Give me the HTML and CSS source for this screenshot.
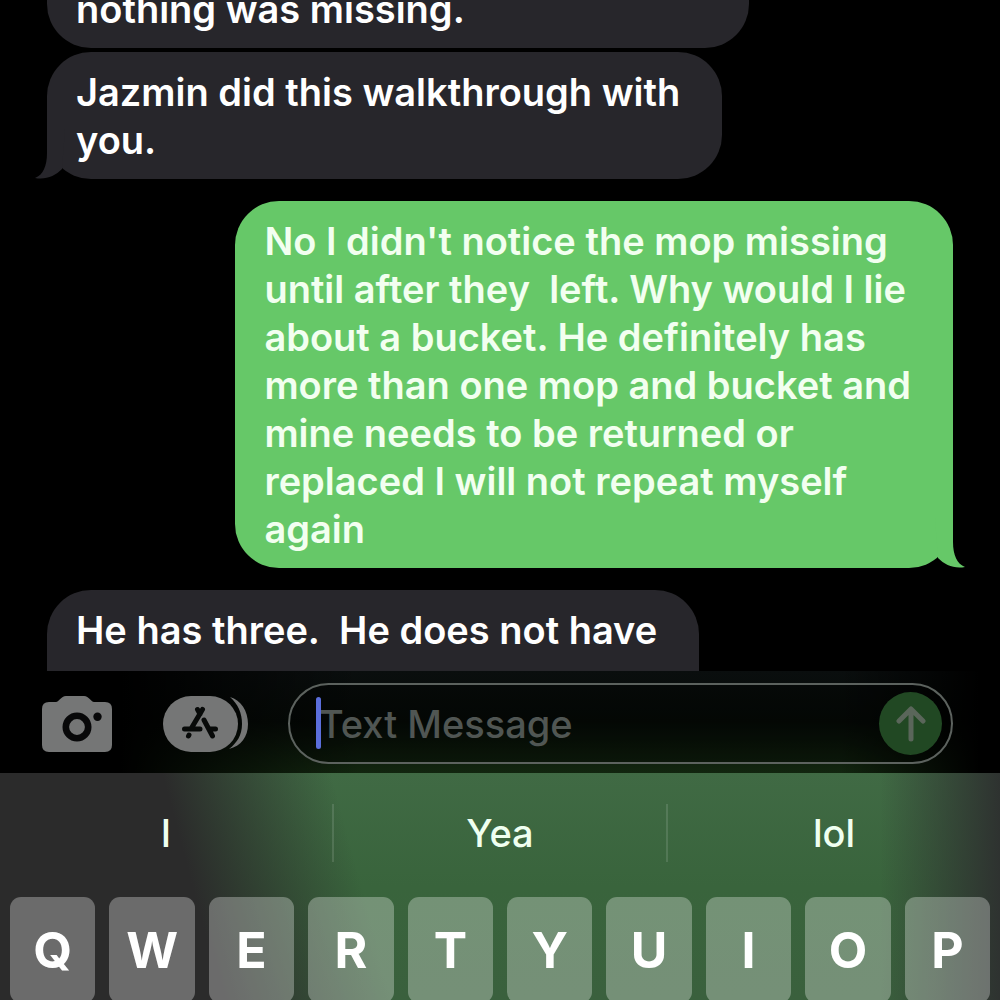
FILE: index.html
```html
<!DOCTYPE html>
<html lang="en">

<head>
  <meta charset="utf-8">
  <meta name="viewport" content="width=device-width, initial-scale=1">
  <title>Messages</title>
  <link rel="stylesheet" href="styles.css">
</head>

<body>
  <main class="thread">
    <p class="bubble received continued">nothing was missing.</p>
    <p class="bubble received">Jazmin did this walkthrough with<br>you.
      <svg class="tail" viewBox="0 0 30 50"><path d="M12 0V24C12 37 8 46 0 49C11 51 20 47 27 40L30 0Z" /></svg>
    </p>
    <p class="bubble sent">No I didn't notice the mop missing<br>until after they&nbsp; left. Why would I lie<br>about a bucket. He definitely has<br>more than one mop and bucket and<br>mine needs to be returned or<br>replaced I will not repeat myself<br>again
      <svg class="tail" viewBox="0 0 30 50"><path d="M12 0V24C12 37 8 46 0 49C11 51 20 47 27 40L30 0Z" /></svg>
    </p>
    <p class="bubble received cut">He has three.&nbsp; He does not have</p>
  </main>

  <form class="composer" onsubmit="return false">
    <button class="icon-button" type="button" aria-label="Camera">
      <svg width="70" height="56" viewBox="0 0 70 56">
        <path fill="#757676" d="M7 6H14C17 6 19 0 24 0H42C47 0 49 6 52 6H63Q70 6 70 13V49Q70 56 63 56H7Q0 56 0 49V13Q0 6 7 6Z" />
        <circle cx="35" cy="31" r="11.200" fill="none" stroke="#080809" stroke-width="6.600" />
        <circle cx="55.500" cy="20.800" r="4.200" fill="#080809" />
      </svg>
    </button>
    <button class="icon-button apps" type="button" aria-label="Apps">
      <svg width="85" height="56" viewBox="0 0 85 56">
        <path fill="#757676" d="M67 1C78 4 85 15 85 28S78 50 66 53C74 47 79 39 79 28S75 8 67 1Z" />
        <rect width="75" height="56" rx="28" fill="#757676" />
        <g fill="none" stroke="#080a09" stroke-width="5" stroke-linecap="round" stroke-linejoin="round">
          <path d="M34.500 13.500L37 18M39.500 13.500L28.500 32M41 24L49.500 40M47 33H52.500M21.500 33H37M26 39L25.500 40" />
        </g>
      </svg>
    </button>
    <div class="field">
      <input type="text" placeholder="Text Message" aria-label="Text Message">
      <span class="caret"></span>
      <button class="send" type="submit" aria-label="Send">
        <svg width="30" height="36" viewBox="0 0 30 36">
          <path d="M15 33V4M3 15L15 3L27 15" />
        </svg>
      </button>
    </div>
  </form>

  <section class="keyboard">
    <div class="suggestions">
      <button type="button">I</button>
      <button type="button">Yea</button>
      <button type="button">lol</button>
    </div>
    <div class="keys">
      <button type="button">Q</button>
      <button type="button">W</button>
      <button type="button">E</button>
      <button type="button">R</button>
      <button type="button">T</button>
      <button type="button">Y</button>
      <button type="button">U</button>
      <button type="button">I</button>
      <button type="button">O</button>
      <button type="button">P</button>
    </div>
  </section>
</body>

</html>
```
FILE: styles.css
```css
* {
  box-sizing: border-box;
}

body {
  margin: 0;
  height: 100vh;
  display: flex;
  flex-direction: column;
  overflow: hidden;
  background: #000;
  color: #fff;
  font-family: Inter, "Liberation Sans", sans-serif;
  font-size: 38px;
  font-weight: 500;
}

button,
input {
  border: 0;
  padding: 0;
  background: none;
  color: inherit;
  font: inherit;
}

/* messages */

.thread {
  flex: 1;
  min-height: 0;
  overflow: hidden;
  display: flex;
  flex-direction: column;
  align-items: flex-start;
  padding: 0 47px;
}

.bubble {
  position: relative;
  flex: none;
  margin: 22px 0 0;
  padding: 16px 42px 15px 29px;
  border-radius: 44px;
  font-weight: 600;
  line-height: 48px;
  white-space: nowrap;
}

.received {
  background: #27262b;
  fill: #27262b;
}

.sent {
  align-self: flex-end;
  background: #66c868;
  fill: #66c868;
  color: #f2fff0;
}

/* the top of this one is scrolled out of view */
.continued {
  width: 702px;
  max-width: 100%;
  margin-top: -31px;
  border-top-left-radius: 0;
  border-top-right-radius: 0;
}

.continued + .bubble {
  margin-top: 4px;
}

/* and the rest of this one is behind the text entry */
.cut {
  padding-bottom: 22px;
  border-bottom-left-radius: 0;
  border-bottom-right-radius: 0;
}

.tail {
  position: absolute;
  bottom: 0;
  left: -12px;
  width: 30px;
  height: 50px;
}

.sent .tail {
  left: auto;
  right: -12px;
  transform: scaleX(-1);
}

/* text entry */

.composer {
  display: flex;
  align-items: center;
  height: 102px;
  padding: 3px 47px 0 42px;
  background:
    linear-gradient(to right, #000 12%, transparent 36%, transparent 84%, #000 98%),
    linear-gradient(#0a0e0e, #060b07 50%, #12260f);
}

.icon-button {
  display: flex;
}

.apps {
  margin: 0 40px 0 51px;
}

.field {
  position: relative;
  flex: 1;
  min-width: 0;
  display: flex;
  align-items: center;
  height: 81px;
  padding: 0 9px 0 29px;
  border: 2px solid #5c625e;
  border-radius: 41px;
  background: rgba(0, 0, 0, 0.3);
}

.field input {
  flex: 1;
  min-width: 0;
  outline: none;
}

.field input::placeholder {
  color: #505653;
  opacity: 1;
}

.caret {
  position: absolute;
  left: 26px;
  top: 12px;
  width: 5px;
  height: 52px;
  border-radius: 3px;
  background: #5b6edb;
}

.send {
  display: flex;
  align-items: center;
  justify-content: center;
  width: 63px;
  height: 63px;
  border-radius: 50%;
  background: #214823;
}

.send path {
  fill: none;
  stroke: #5a665a;
  stroke-width: 5;
  stroke-linecap: round;
  stroke-linejoin: round;
}

/* keyboard */

.keyboard {
  background:
    linear-gradient(75deg, #2b2b2b 21%, rgba(43, 43, 43, 0) 37%),
    linear-gradient(to right, rgba(46, 50, 48, 0) 88%, #2e3230 100%),
    linear-gradient(#406a44, #39643c 50%, #3a603d);
}

.suggestions {
  display: flex;
  height: 124px;
  padding: 31px 0 35px;
}

.suggestions button {
  flex: 1;
  color: #effff0;
}

.suggestions button + button {
  border-left: 2px solid rgba(255, 255, 255, 0.12);
}

/* the row runs on past the lower edge of the window */
.keys {
  display: flex;
  gap: 14px;
  height: 103px;
  padding: 0 10px;
}

.keys button {
  flex: 1;
  height: 106px;
  border-radius: 11px;
  background: rgba(255, 255, 255, 0.3);
  font-size: 50px;
  font-weight: 700;
}
```
